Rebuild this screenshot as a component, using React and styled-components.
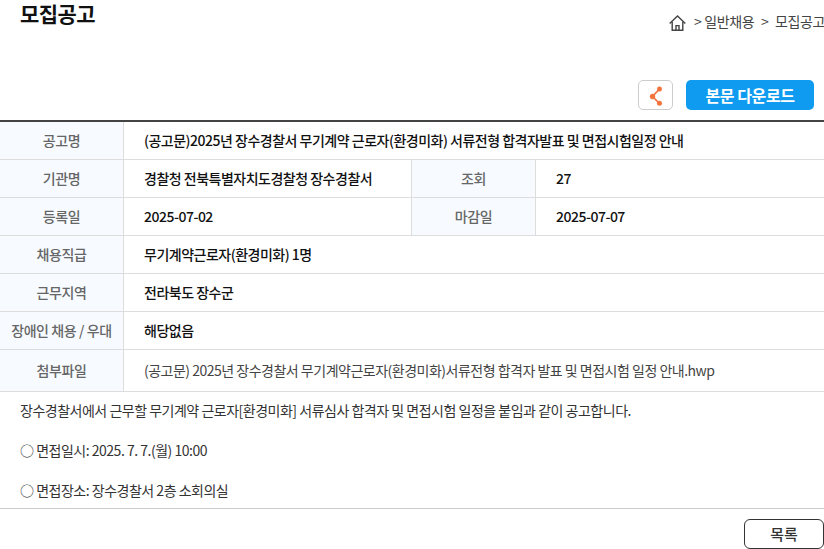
import React from "react";
import styled, { createGlobalStyle } from "styled-components";

const Global = createGlobalStyle`
  html, body { margin: 0; padding: 0; background: #fff; }
  body { width: 824px; height: 549px; overflow: hidden; font-family: "Noto Sans CJK KR", "Noto Sans", sans-serif; color: #222; }
`;
const Page = styled.div`
  width: 824px; height: 549px; overflow: hidden; display: flex; flex-direction: column;
`;
const Header = styled.header`
  height: 80px; display: flex; justify-content: space-between; align-items: flex-start;
`;
const Title = styled.h1`
  margin: 0; padding-left: 20px; font-size: 21px; line-height: 27px; font-weight: 700; color: #111; letter-spacing: -0.6px;
`;
const Crumbs = styled.nav`
  display: flex; align-items: center; gap: 8px; padding-top: 10px; font-size: 14px; line-height: 22px; color: #444; white-space: nowrap; width: 155px; overflow: hidden; flex: none; letter-spacing: -0.35px;
`;
const CrumbSep = styled.span`
  margin: 0 1px;
`;
const Actions = styled.div`
  height: 40px; display: flex; justify-content: flex-end; align-items: flex-start; gap: 13px; padding-right: 10px;
`;
const ShareButton = styled.button`
  width: 35px; height: 30px; padding: 0; background: #fff; border: 1px solid #ccc; border-radius: 5px; display: flex; align-items: center; justify-content: center;
`;
const DownloadButton = styled.button`
  width: 128px; height: 30px; padding: 0; border: 0; border-radius: 5px; background: #0f9bef; color: #fff; font: 700 16px/30px "Noto Sans CJK KR", sans-serif; letter-spacing: -0.4px;
`;
const Table = styled.div`
  border-top: 2px solid #444;
  display: grid;
  grid-template-columns: 124px 287px 125px 1fr;
  grid-template-rows: 38px 38px 38px 38px 38px 38px 42px;
`;
const Label = styled.div`
  background: #f7fbff; border-bottom: 1px solid #ddd; border-right: 1px solid #ddd; display: flex; align-items: center; justify-content: center; font-size: 14px; line-height: 20px; padding-bottom: 2px; font-weight: 500; color: #666; white-space: nowrap; letter-spacing: -0.4px;
  ${p => p.$mid && "border-left: 1px solid #ddd;"}
`;
const Value = styled.div`
  border-bottom: 1px solid #ddd; display: flex; align-items: center; padding-left: 20px; padding-bottom: 2px; font-size: 14px; line-height: 20px; font-weight: ${p => p.$plain ? 400 : 500}; color: ${p => p.$plain ? "#444" : "#111"}; white-space: nowrap; letter-spacing: -0.5px;
  ${p => p.$wide && "grid-column: 2 / -1;"}
`;
const Body = styled.div`
  height: 117px; border-bottom: 1px solid #ccc; box-sizing: border-box; padding: 0 0 0 20px; overflow: hidden;
`;
const Para = styled.p`
  margin: 0; height: 40px; font-size: 14px; line-height: 37px; color: #333; letter-spacing: -0.49px; white-space: nowrap;
`;
const Footer = styled.footer`
  display: flex; justify-content: flex-end; padding-top: 10px;
`;
const ListButton = styled.button`
  width: 80px; height: 30px; padding: 0; background: #fff; border: 1px solid #333; border-radius: 6px; color: #333; font: 500 15px/28px "Noto Sans CJK KR", sans-serif;
`;

const Home = () => (
  <svg width="17" height="16" viewBox="0 0 17 16" fill="none" stroke="#444" strokeWidth="1.4" style={{ flex: "none", marginTop: 4 }}>
    <path d="M.7 8.6 8.5 1 16.3 8.6" />
    <path d="M3.2 6.8V15.2H13.8V6.8" />
    <path d="M7 15.2V10.6H10V15.2" />
  </svg>
);
const Share = () => (
  <svg width="16" height="22" viewBox="0 0 16 22" fill="#f0733c" stroke="#f0733c">
    <path d="M11.5 5 4.5 12.5l7 7" fill="none" strokeWidth="1.7" />
    <circle cx="11.5" cy="5" r="2.3" strokeWidth="0.5" />
    <circle cx="4.5" cy="12.5" r="2.5" strokeWidth="0.5" />
    <circle cx="11.5" cy="19.3" r="2.3" strokeWidth="0.5" />
  </svg>
);

export default function App() {
  return (
    <Page>
      <Global />
      <Header>
        <Title>모집공고</Title>
        <Crumbs>
          <Home />
          <span>&gt; 일반채용<CrumbSep> &nbsp;&gt;&nbsp; </CrumbSep>모집공고</span>
        </Crumbs>
      </Header>
      <Actions>
        <ShareButton aria-label="공유"><Share /></ShareButton>
        <DownloadButton>본문 다운로드</DownloadButton>
      </Actions>
      <Table>
        <Label>공고명</Label>
        <Value $wide>(공고문)2025년 장수경찰서 무기계약 근로자(환경미화) 서류전형 합격자발표 및 면접시험일정 안내</Value>
        <Label>기관명</Label>
        <Value>경찰청 전북특별자치도경찰청 장수경찰서</Value>
        <Label $mid>조회</Label>
        <Value>27</Value>
        <Label>등록일</Label>
        <Value>2025-07-02</Value>
        <Label $mid>마감일</Label>
        <Value>2025-07-07</Value>
        <Label>채용직급</Label>
        <Value $wide>무기계약근로자(환경미화) 1명</Value>
        <Label>근무지역</Label>
        <Value $wide>전라북도 장수군</Value>
        <Label>장애인 채용 / 우대</Label>
        <Value $wide>해당없음</Value>
        <Label>첨부파일</Label>
        <Value $wide $plain>(공고문) 2025년 장수경찰서 무기계약근로자(환경미화)서류전형 합격자 발표 및 면접시험 일정 안내.hwp</Value>
      </Table>
      <Body>
        <Para>장수경찰서에서 근무할 무기계약 근로자[환경미화] 서류심사 합격자 및 면접시험 일정을 붙임과 같이 공고합니다.</Para>
        <Para>○ 면접일시: 2025. 7. 7.(월) 10:00</Para>
        <Para>○ 면접장소: 장수경찰서 2층 소회의실</Para>
      </Body>
      <Footer>
        <ListButton>목록</ListButton>
      </Footer>
    </Page>
  );
}
